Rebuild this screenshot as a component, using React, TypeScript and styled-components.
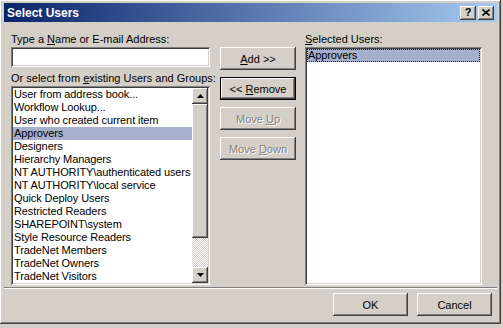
import React from "react";
import styled, { createGlobalStyle } from "styled-components";

const face = "#d4d0c8";
const shadow = "#808080";
const dark = "#404040";
const highlight = "#a6b0cd";

const GlobalStyle = createGlobalStyle`
  html, body {
    margin: 0;
    padding: 0;
    background: ${face};
  }
  body {
    font-family: "Liberation Sans", Arial, sans-serif;
    font-size: 11px;
    color: #000;
  }
`;

const raised = `
  box-shadow: inset -1px -1px ${dark}, inset 1px 1px #fff,
    inset -2px -2px ${shadow}, inset 2px 2px ${face};
`;
const sunken = `
  box-shadow: inset 1px 1px ${shadow}, inset -1px -1px #fff,
    inset 2px 2px ${dark}, inset -2px -2px ${face};
`;

const Window = styled.div`
  box-sizing: border-box;
  width: 501px;
  height: 324px;
  padding: 3px 4px 4px 4px;
  background: ${face};
  ${raised}
  display: flex;
  flex-direction: column;
`;

const TitleBar = styled.div`
  height: 19px;
  display: flex;
  align-items: center;
  justify-content: space-between;
  padding: 0 3px 0 3px;
  background: linear-gradient(to right, #0a246a, #a6caf0);
  color: #fff;
  font-weight: bold;
  font-size: 12px;
`;

const TitleButtons = styled.div`
  display: flex;
  gap: 2px;
`;

const TitleButton = styled.div`
  box-sizing: border-box;
  width: 16px;
  height: 14px;
  background: ${face};
  ${raised}
  color: #000;
  font-size: 11px;
  font-weight: bold;
  display: flex;
  align-items: center;
  justify-content: center;
  line-height: 1;
`;

const Body = styled.div`
  display: flex;
  padding: 11px 0 0 7px;
`;

const Column = styled.div<{ $width: number; $gap?: number }>`
  width: ${(p) => p.$width}px;
  margin-left: ${(p) => p.$gap ?? 0}px;
  display: flex;
  flex-direction: column;
`;

const Label = styled.div<{ $top?: number }>`
  height: 13px;
  line-height: 13px;
  margin-top: ${(p) => p.$top ?? 0}px;
  margin-bottom: 1px;
  white-space: nowrap;
`;

const TextInput = styled.div`
  box-sizing: border-box;
  height: 20px;
  background: #fff;
  ${sunken}
`;

const ListBox = styled.div<{ $height: number }>`
  box-sizing: border-box;
  height: ${(p) => p.$height}px;
  padding: 2px;
  background: #fff;
  ${sunken}
  display: flex;
`;

const Items = styled.div`
  flex: 1;
  display: flex;
  flex-direction: column;
  overflow: hidden;
`;

const Item = styled.div<{ $selected?: boolean; $focus?: boolean }>`
  box-sizing: border-box;
  height: 13px;
  line-height: 11px;
  padding: 0 1px 0 0;
  letter-spacing: -0.1px;
  white-space: nowrap;
  background: ${(p) => (p.$selected ? highlight : "transparent")};
  border: 1px ${(p) => (p.$focus ? "dotted #222" : "solid transparent")};
`;

const ScrollBar = styled.div`
  width: 16px;
  flex-shrink: 0;
  display: flex;
  flex-direction: column;
`;

const ScrollButton = styled.div`
  box-sizing: border-box;
  height: 16px;
  background: ${face};
  ${raised}
  display: flex;
  align-items: center;
  justify-content: center;
`;

const Thumb = styled.div`
  height: 134px;
  box-sizing: border-box;
  background: ${face};
  ${raised}
`;

const Track = styled.div`
  flex: 1;
  background-image: repeating-conic-gradient(${face} 0 25%, #fff 0 50%);
  background-size: 2px 2px;
`;

const ButtonStack = styled.div`
  display: flex;
  flex-direction: column;
  gap: 7px;
  padding-top: 14px;
`;

const Button = styled.div<{ $default?: boolean; $disabled?: boolean; $width?: number }>`
  box-sizing: border-box;
  width: ${(p) => p.$width ?? 76}px;
  height: 23px;
  background: ${face};
  display: flex;
  align-items: center;
  justify-content: center;
  white-space: pre;
  color: ${(p) => (p.$disabled ? shadow : "#000")};
  text-shadow: ${(p) => (p.$disabled ? "1px 1px #fff" : "none")};
  ${(p) =>
    p.$default
      ? `border: 1px solid #000;
         box-shadow: inset -1px -1px ${dark}, inset 1px 1px #fff,
           inset -2px -2px ${shadow}, inset 2px 2px ${face};`
      : raised}
`;

const Separator = styled.div`
  margin-top: 2px;
  height: 1px;
  background: ${shadow};
  border-bottom: 1px solid #fff;
`;

const Footer = styled.div`
  display: flex;
  justify-content: flex-end;
  gap: 9px;
  padding: 4px 5px 0 0;
`;

const Arrow = ({ down }: { down?: boolean }) => (
  <svg width="7" height="4" viewBox="0 0 7 4">
    <path d={down ? "M0 0h7L3.5 4z" : "M3.5 0L7 4H0z"} fill="#000" />
  </svg>
);

const CloseGlyph = () => (
  <svg width="8" height="7" viewBox="0 0 8 7">
    <path d="M0.5 0.5L7.5 6.5M7.5 0.5L0.5 6.5" stroke="#000" strokeWidth="1.6" />
  </svg>
);

const groups = [
  "User from address book...",
  "Workflow Lookup...",
  "User who created current item",
  "Approvers",
  "Designers",
  "Hierarchy Managers",
  "NT AUTHORITY\\authenticated users",
  "NT AUTHORITY\\local service",
  "Quick Deploy Users",
  "Restricted Readers",
  "SHAREPOINT\\system",
  "Style Resource Readers",
  "TradeNet Members",
  "TradeNet Owners",
  "TradeNet Visitors",
];

export default function App() {
  return (
    <>
      <GlobalStyle />
      <Window>
        <TitleBar>
          <span>Select Users</span>
          <TitleButtons>
            <TitleButton>?</TitleButton>
            <TitleButton>
              <CloseGlyph />
            </TitleButton>
          </TitleButtons>
        </TitleBar>
        <Body>
          <Column $width={199}>
            <Label>
              Type a <u>N</u>ame or E-mail Address:
            </Label>
            <TextInput />
            <Label $top={5}>
              Or select from <u>e</u>xisting Users and Groups:
            </Label>
            <ListBox $height={199}>
              <Items>
                {groups.map((g) => (
                  <Item key={g} $selected={g === "Approvers"}>
                    {g}
                  </Item>
                ))}
              </Items>
              <ScrollBar>
                <ScrollButton>
                  <Arrow />
                </ScrollButton>
                <Thumb />
                <Track />
                <ScrollButton>
                  <Arrow down />
                </ScrollButton>
              </ScrollBar>
            </ListBox>
          </Column>
          <Column $width={76} $gap={10}>
            <ButtonStack>
              <Button>
                <span>
                  <u>A</u>dd &gt;&gt;
                </span>
              </Button>
              <Button $default>
                <span>
                  &lt;&lt; <u>R</u>emove
                </span>
              </Button>
              <Button $disabled>
                <span>
                  Move <u>U</u>p
                </span>
              </Button>
              <Button $disabled>
                <span>
                  Move <u>D</u>own
                </span>
              </Button>
            </ButtonStack>
          </Column>
          <Column $width={177} $gap={9}>
            <Label>
              <u>S</u>elected Users:
            </Label>
            <ListBox $height={238}>
              <Items>
                <Item $selected $focus>
                  Approvers
                </Item>
              </Items>
            </ListBox>
          </Column>
        </Body>
        <Separator />
        <Footer>
          <Button $width={75}>OK</Button>
          <Button $width={75}>Cancel</Button>
        </Footer>
      </Window>
    </>
  );
}
